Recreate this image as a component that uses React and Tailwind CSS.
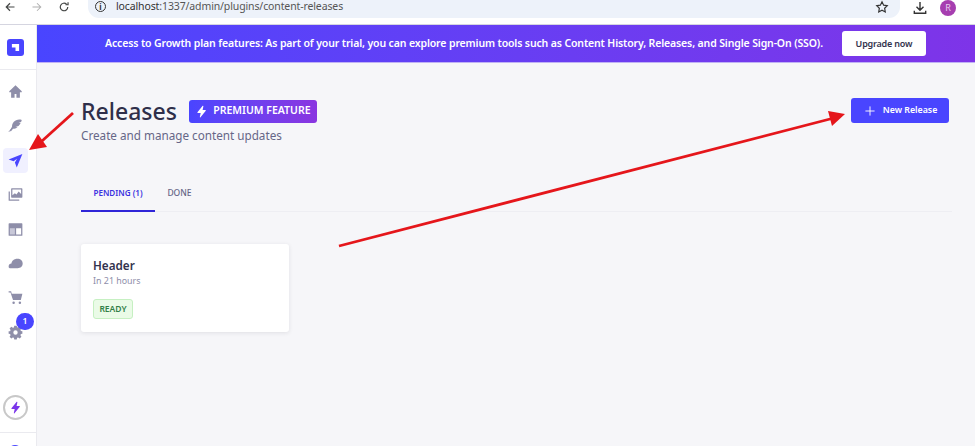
import React from "react";

const Bolt = ({ className }) => (
  <svg viewBox="0 0 24 24" className={className} fill="currentColor"><path d="M14.200 1.500 4.500 13.600c-.4.500 0 1.200.6 1.200h5.400l-1.600 7.200c-.2.800.8 1.300 1.300.6l9.700-12.200c.4-.5 0-1.200-.6-1.200h-5.300l1.500-7.100c.2-.8-.8-1.200-1.300-.6Z" /></svg>
);

const Icon = ({ children, active }) => (
  <div className={`w-[25px] h-[25px] shrink-0 flex items-center justify-center rounded-[4px] ${active ? "bg-[#f0f0ff] text-[#4945ff]" : "text-[#8e8ea9]"}`}>
    <svg viewBox="0 0 24 24" className="w-[15px] h-[15px]" fill="currentColor">{children}</svg>
  </div>
);

export default function App() {
  return (
    <div className="w-[975px] h-[446px] overflow-hidden relative flex flex-col bg-white text-[#32324d]" style={{ fontFamily: '"Noto Sans", "Open Sans", sans-serif' }}>
      {/* browser chrome */}
      <div className="h-[25px] shrink-0 flex items-start bg-white border-b border-[#d5d5e0]">
        <div className="flex items-center w-[88px] h-[14px] pl-[4px] gap-[15px] text-[#454746]">
          <svg viewBox="0 0 16 16" className="w-[12px] h-[12px]" fill="none" stroke="currentColor" strokeWidth="1.6"><path d="M14 8H3M8 3 3 8l5 5" /></svg>
          <svg viewBox="0 0 16 16" className="w-[12px] h-[12px] text-[#b0b0b0]" fill="none" stroke="currentColor" strokeWidth="1.4"><path d="M2 8h11M8 3l5 5-5 5" /></svg>
          <svg viewBox="0 0 16 16" className="w-[12px] h-[12px]" fill="none" stroke="currentColor" strokeWidth="1.6"><path d="M13 8a5 5 0 1 1-1.600-3.700M13.400 1.600v3.400H10" /></svg>
        </div>
        <div className="w-[812px] h-[19px] -mt-[1px] bg-[#edf2fa] rounded-b-[11px] flex items-center pl-[7px] pb-[4px]">
          <div className="w-[11px] h-[11px] rounded-full border border-[#333] flex items-center justify-center text-[8px] leading-none font-bold text-[#333]">i</div>
          <span className="ml-[10px] text-[10.500px] tracking-[-0.12px] leading-none text-[#333]">localhost<span className="text-[#555]">:1337/admin/plugins/content-releases</span></span>
          <svg viewBox="0 0 24 24" className="w-[14px] h-[14px] ml-auto mr-[11px] text-[#333]" fill="none" stroke="currentColor" strokeWidth="2"><path d="m12 3 2.800 5.800 6.200.9-4.500 4.400 1.100 6.300L12 17.400l-5.600 3 1.100-6.300L3 9.700l6.200-.9L12 3Z" /></svg>
        </div>
        <div className="flex items-center h-[15px] ml-[13px] gap-[13px]">
          <svg viewBox="0 0 16 16" className="w-[14px] h-[14px] text-[#333]" fill="none" stroke="currentColor" strokeWidth="1.6"><path d="M8 1v9M4 6.500 8 10.500l4-4M1.500 11v3h13v-3" /></svg>
          <div className="w-[16px] h-[16px] rounded-full bg-[#a63eb0] text-[#e9d0ec] text-[9px] leading-none flex items-center justify-center">R</div>
        </div>
      </div>

      <div className="flex-1 flex min-h-0">
        {/* sidebar */}
        <aside className="w-[37px] shrink-0 bg-white border-r border-[#eaeaef] flex flex-col">
          <div className="h-[45px] w-full shrink-0 border-b border-[#eaeaef] flex items-center pl-[7px]">
            <div className="w-[17px] h-[17px] rounded-[3px] bg-[#4945ff] flex items-center justify-center">
              <svg viewBox="0 0 10 10" className="w-[9px] h-[9px]" fill="#fff"><path d="M1 1h8v8H5V5H1Z" /></svg>
            </div>
          </div>
          <div className="flex flex-col pl-[3px] mt-[9px] gap-[9.400px] shrink-0">
            <Icon><path d="M12 2 2 11.500V13h3v9h5.500v-6h3v6H19v-9h3v-1.500Z" /></Icon>
            <Icon>
              <path d="M22 3c-5-1.500-10 0-13 3.500-2 2.400-2.600 5-2.600 7.400L3 20l1.500 1.500 3.500-4.200c2.400 0 5-.6 7.200-2.400l-3.400-.6 5-1.600c1.500-1.500 2.700-3.200 3.400-4.800l-3.200-.3 3.900-1.300c.6-1.400.9-2.500 1.100-3.300Z" />
              <path d="M1.500 22 13 9" stroke="currentColor" strokeWidth="1.500" fill="none" />
            </Icon>
            <Icon active><path d="M23 1.500 1 10.500 9 13l5.500-4L11 15l3 8Z" /></Icon>
            <Icon>
              <path fillRule="evenodd" d="M6 2h16a1 1 0 0 1 1 1v13a1 1 0 0 1-1 1H6a1 1 0 0 1-1-1V3a1 1 0 0 1 1-1Zm1 2v9l4-3 2.500 2L17 7l4 4V4Z" />
              <path d="M1 7h2v13h15v2H2a1 1 0 0 1-1-1Z" />
            </Icon>
            <Icon>
              <path fillRule="evenodd" d="M2 2h20a1 1 0 0 1 1 1v18a1 1 0 0 1-1 1H2a1 1 0 0 1-1-1V3a1 1 0 0 1 1-1Zm11 8v10h8V10Z" />
              <path d="M3 10h8v10H3Z" fill="#c8c8d8" />
            </Icon>
            <Icon><path d="M1 17c0-3 2-5 4.500-5 .5-4 4-7.500 9.500-7.500 5 0 8.500 3 8.500 7.500 0 4.500-3.500 7.500-8 7.500H4.500C2.500 19.500 1 18.500 1 17Z" /></Icon>
            <Icon><path d="M1 2h4l1 4h17l-2.500 10H8L4 4H1Zm8 20.500a2 2 0 1 1 0-4 2 2 0 0 1 0 4Zm10 0a2 2 0 1 1 0-4 2 2 0 0 1 0 4Z" /></Icon>
            <div className="relative">
              <Icon><path fillRule="evenodd" d="m10 1-.6 2.800-1.700.7-2.400-1.600-2.800 2.800 1.600 2.400-.7 1.700L1 10v4l2.400.5.7 1.700-1.600 2.400 2.800 2.800 2.400-1.600 1.700.7L10 23h4l.6-2.500 1.700-.7 2.400 1.600 2.800-2.800-1.600-2.400.7-1.700L23 14v-4l-2.400-.6-.7-1.700 1.600-2.400-2.800-2.800-2.400 1.600-1.700-.7L14 1ZM12 8.500a3.500 3.500 0 1 1 0 7 3.500 3.500 0 0 1 0-7Z" /></Icon>
              <div className="absolute left-[13px] -top-[7px] w-[18px] h-[17px] rounded-full bg-[#4945ff] text-white text-[8.500px] font-semibold leading-none flex items-center justify-center">1</div>
            </div>
          </div>
          <div className="mt-[50px] ml-[3px] w-[25px] h-[25px] shrink-0 rounded-full border-[2px] border-[#c8c8c8] flex items-center justify-center text-[#7b36ea]">
            <Bolt className="w-[13px] h-[13px]" />
          </div>
          <div className="mt-[12px] w-full shrink-0 border-t border-[#eaeaef]" />
          <div className="mt-[12px] ml-[8px] w-[14px] h-[14px] rounded-full bg-[#4945ff] shrink-0" />
        </aside>

        {/* main */}
        <main className="flex-1 min-w-0 bg-[#f6f6f9] flex flex-col">
          <div className="h-[38px] shrink-0 bg-gradient-to-r from-[#4945ff] to-[#7e34e8] border-b border-[#c0b2f5] flex items-center text-white text-[10.500px] tracking-[-0.13px] font-semibold whitespace-nowrap">
            <span className="ml-[68px]">Access to Growth plan features: As part of your trial, you can explore premium tools such as Content History, Releases, and Single Sign-On (SSO).</span>
            <div className="ml-[19px] w-[84px] h-[25px] shrink-0 bg-white rounded-[3px] text-[#32324d] text-[9px] tracking-[-0.2px] font-semibold flex items-center justify-center">Upgrade now</div>
          </div>

          <div className="pl-[44px] pr-[26px] pt-[33px] flex items-start justify-between">
            <div>
              <div className="flex items-center gap-[12px]">
                <h1 className="text-[23px] leading-[30px] font-medium text-[#2f2f4a]">Releases</h1>
                <div className="h-[23px] w-[128px] rounded-[3px] bg-gradient-to-r from-[#4945ff] to-[#8a35e0] text-white text-[10.500px] font-semibold flex items-center justify-center gap-[5px]">
                  <Bolt className="w-[13px] h-[13px]" />
                  PREMIUM FEATURE
                </div>
              </div>
              <p className="text-[11.700px] leading-[17px] mt-[1px] text-[#666687]">Create and manage content updates</p>
            </div>
            <div className="h-[25px] w-[98px] rounded-[3px] bg-[#4945ff] text-white text-[8.800px] font-semibold flex items-center justify-center gap-[8px] mt-[2px] pl-[2px]">
              <svg viewBox="0 0 12 12" className="w-[10px] h-[10px]" fill="none" stroke="currentColor" strokeWidth="1.100"><path d="M6 .5v11M.5 6h11" /></svg>
              New Release
            </div>
          </div>

          <div className="mt-[31px] ml-[44px] mr-[23px] flex border-b border-[#eeeef3] h-[37px]">
            <div className="w-[74px] h-[37px] flex items-center justify-center text-[8.100px] font-semibold text-[#3b32e0] border-b-2 border-[#2f25d8] pt-[1px]">PENDING (1)</div>
            <div className="w-[49px] h-[37px] flex items-center justify-center text-[8.500px] font-medium text-[#666687] pt-[1px] pb-[2px]">DONE</div>
          </div>

          <div className="mt-[32px] ml-[44px] w-[208px] h-[88px] bg-white rounded-[3px] shadow-[0_1px_4px_rgba(33,33,52,0.1)] pl-[12px] pt-[13px]">
            <div className="text-[11.700px] leading-[17px] font-semibold text-[#32324d]">Header</div>
            <div className="text-[8.900px] leading-[13px] text-[#8e8ea9]">In 21 hours</div>
            <div className="mt-[12px] w-[40px] h-[20px] rounded-[3px] bg-[#eafbe7] border border-[#c6f0c2] text-[#328048] text-[8.500px] font-semibold flex items-center justify-center">READY</div>
          </div>
        </main>
      </div>

      {/* annotation arrows over the screenshot */}
      <svg className="absolute inset-0 w-[975px] h-[446px] pointer-events-none" viewBox="0 0 975 446">
        <g fill="#e5161b" stroke="#e5161b">
          <path d="M73 113 42 141" strokeWidth="2.800" fill="none" />
          <path d="M29 150 47 147 38 134Z" strokeWidth="0" />
          <path d="M339 246 832 118.500" strokeWidth="2.800" fill="none" />
          <path d="M845 114 828 111 832 126Z" strokeWidth="0" />
        </g>
      </svg>
    </div>
  );
}
